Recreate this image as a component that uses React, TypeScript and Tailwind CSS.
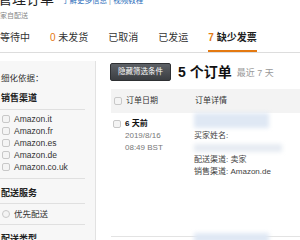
import React from 'react'

const channels = ['Amazon.it', 'Amazon.fr', 'Amazon.es', 'Amazon.de', 'Amazon.co.uk']

function Box({ round = false }: { round?: boolean }) {
    return (
        <span
            className={`inline-block w-[8px] h-[8px] border border-[#c8c8c8] bg-[#f4f4f4] shrink-0 ${round ? 'rounded-full' : 'rounded-[2px]'}`}
        />
    )
}

export default function App() {
    return (
        <div className="w-[300px] h-[240px] overflow-hidden bg-white text-[#333] font-['Liberation_Sans','Noto_Sans_CJK_SC',sans-serif]">
            {/* Header */}
            <div className="-mt-[10px]">
                <div className="flex items-end h-[18px] -ml-[2px]">
                    <span className="text-[14px] leading-[18px] text-[#222]">管理订单</span>
                    <span className="ml-[8px] mb-[2px] text-[7.5px] leading-[10px] text-[#2a6ebb]">
                        了解更多信息 <span className="text-[#999]">|</span> 视频教程
                    </span>
                </div>
                <div className="mt-[3px] text-[7px] leading-[10px] text-[#888]">家自配送</div>
            </div>

            {/* Tabs */}
            <div className="mt-[11px] flex gap-[20px] border-b border-[#ddd] text-[10px] leading-[12px] text-[#333]">
                <div className="pb-[6px] border-b-2 border-transparent">等待中</div>
                <div className="pb-[6px] border-b-2 border-transparent"><span className="text-[#e47911]">0</span> 未发货</div>
                <div className="pb-[6px] border-b-2 border-transparent">已取消</div>
                <div className="pb-[6px] border-b-2 border-transparent">已发运</div>
                <div className="pb-[6px] border-b-2 border-[#e47911] font-bold text-[#222]">
                    <span className="text-[#e47911]">7</span> 缺少发票
                </div>
            </div>

            {/* Body */}
            <div className="flex mt-[8px]">
                {/* Sidebar */}
                <div className="w-[96px] shrink-0 h-[200px] bg-[#f7f7f7] border-r border-[#e2e2e2] pr-[10px] pt-[11px]">
                    <div className="text-[8.5px] leading-[12px] text-[#333] pl-[1px]">细化依据：</div>
                    <div className="mt-[8px] text-[9px] leading-[12px] font-bold text-[#222] pl-[1px]">销售渠道</div>
                    <div className="mt-[5px] border-b border-[#e0e0e0]" />
                    <div className="flex flex-col gap-[2px] mt-[4px]">
                        {channels.map(c => (
                            <div key={c} className="flex items-center gap-[4px] h-[10px] pl-[2px]">
                                <Box />
                                <span className="text-[8.5px] leading-[10px] text-[#333]">{c}</span>
                            </div>
                        ))}
                    </div>
                    <div className="mt-[6px] border-b border-[#e0e0e0]" />
                    <div className="mt-[8px] text-[9px] leading-[12px] font-bold text-[#222] pl-[1px]">配送服务</div>
                    <div className="mt-[4px] border-b border-[#e0e0e0]" />
                    <div className="flex items-center gap-[4px] h-[10px] pl-[2px] mt-[5px]">
                        <Box round />
                        <span className="text-[8.5px] leading-[10px] text-[#333]">优先配送</span>
                    </div>
                    <div className="mt-[5px] border-b border-[#e0e0e0]" />
                    <div className="mt-[8px] text-[9px] leading-[12px] font-bold text-[#222] pl-[1px]">配送类型</div>
                </div>

                {/* Main */}
                <div className="flex-1 pl-[14px] pt-[2px] min-w-0">
                    <div className="flex items-center h-[18px]">
                        <button className="h-[18px] px-[7px] rounded-[2px] bg-gradient-to-b from-[#5d6166] to-[#3b3e42] border border-[#2e3033] text-white text-[7.5px] leading-[10px]">
                            隐藏筛选条件
                        </button>
                        <span className="ml-[7px] text-[14px] leading-[18px] font-bold text-[#111]">5 个订单</span>
                        <span className="ml-[5px] mt-[2px] text-[9px] leading-[12px] text-[#999]">最近 7 天</span>
                    </div>

                    <div className="mt-[8px] ml-[1px]">
                        <div className="flex items-center h-[24px] bg-[#f3f3f3] text-[8px] leading-[10px] text-[#333]">
                            <div className="w-[84px] flex items-center gap-[4px] pl-[3px]">
                                <Box />
                                <span>订单日期</span>
                            </div>
                            <span>订单详情</span>
                        </div>

                        <div className="flex h-[124px] border-b border-[#e3e3e3] text-[8px] leading-[12px]">
                            <div className="w-[84px] pl-[2px] pt-[5px]">
                                <div className="flex items-center gap-[4px]">
                                    <Box />
                                    <span className="font-bold text-[#111]">6 天前</span>
                                </div>
                                <div className="pl-[12px] text-[#777]">2019/8/16</div>
                                <div className="pl-[12px] text-[#777]">08:49 BST</div>
                            </div>
                            <div className="flex-1 text-[#444] -ml-[1px]">
                                <div className="w-[75px] h-[15px] bg-[#dfe8f4] blur-[2px]" />
                                <div className="mt-[2px]">买家姓名:</div>
                                <div className="w-[88px] h-[8px] my-[2px] bg-[#e6ebf2] blur-[2px]" />
                                <div>配送渠道: 卖家</div>
                                <div>销售渠道: Amazon.de</div>
                            </div>
                        </div>
                        <div className="flex">
                            <div className="w-[83px]" />
                            <div className="w-[75px] h-[10px] -mt-[4px] bg-[#dfe8f4] blur-[2px]" />
                        </div>
                    </div>
                </div>
            </div>
        </div>
    )
}
